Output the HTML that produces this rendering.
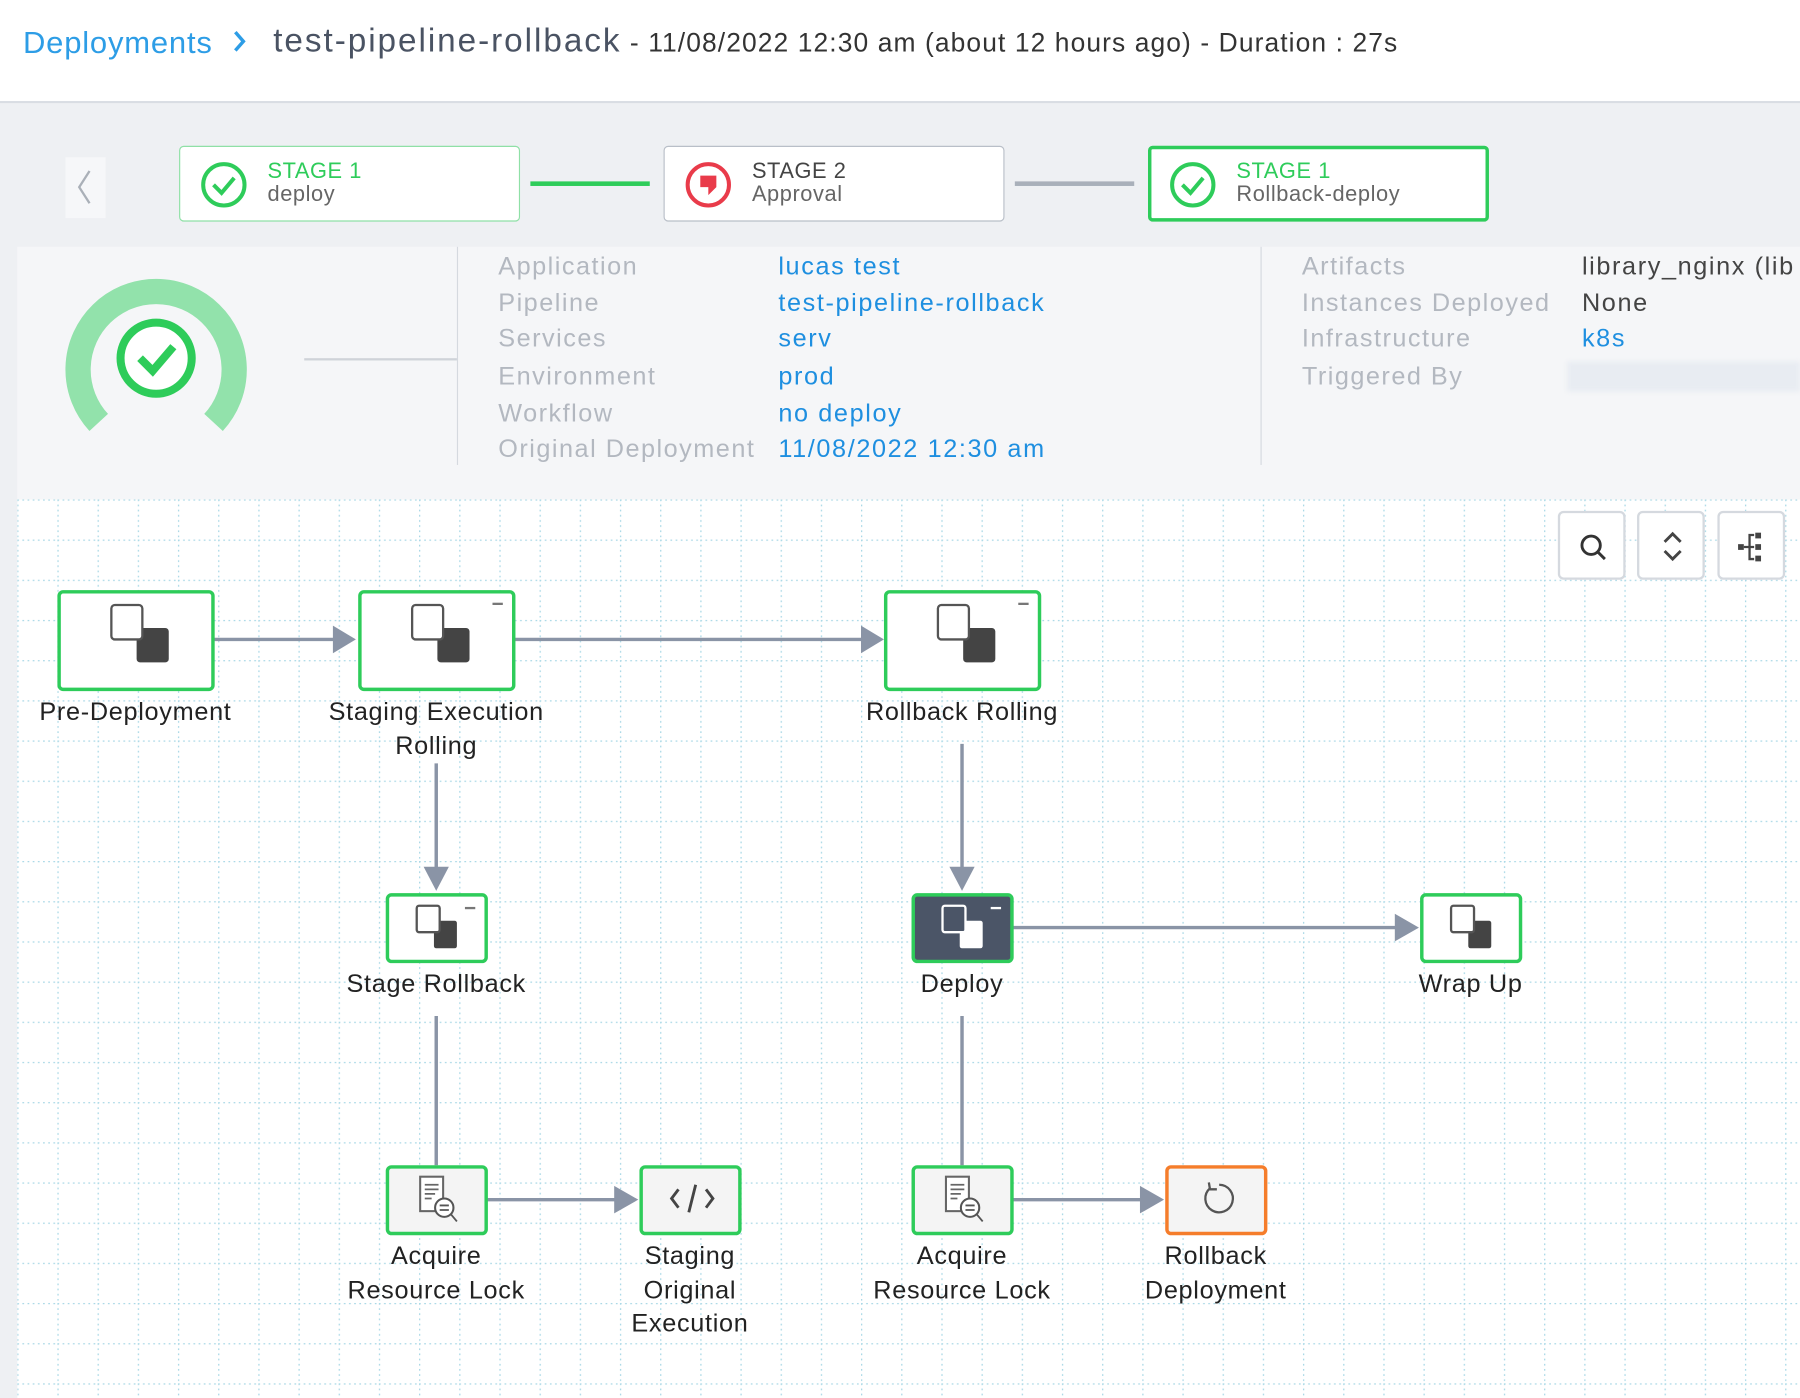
<!DOCTYPE html>
<html><head><meta charset="utf-8"><style>
html,body{margin:0;padding:0;width:1800px;height:1398px;overflow:hidden;background:#fff;}
#w{position:absolute;left:0;top:0;width:1568px;height:1218px;transform:scale(1.148);transform-origin:0 0;font-family:"Liberation Sans",sans-serif;}
.a{position:absolute;}
.hdr{left:0;top:0;width:1568px;height:88px;background:#fff;border-bottom:2px solid #d9dde3;}
.body{left:0;top:90px;width:1568px;height:1128px;background:#eef0f3;}
.stg{position:absolute;top:127px;width:297px;height:66px;background:#fff;border-radius:4px;box-sizing:border-box;}
.st1{font-size:19px;position:absolute;left:76px;top:11px;letter-spacing:.5px;}
.st2{font-size:19px;position:absolute;left:76px;top:31px;color:#666;letter-spacing:.5px;}
.lbl{position:absolute;font-size:22px;color:#b3b8c0;letter-spacing:1.3px;white-space:nowrap;}
.val{position:absolute;font-size:22px;color:#1e8fe0;letter-spacing:1.4px;white-space:nowrap;}
.node{position:absolute;box-sizing:border-box;border:3px solid #2ecc5a;border-radius:5px;background:#fff;}
.nl{position:absolute;font-size:22px;color:#222;text-align:center;line-height:29.5px;width:240px;letter-spacing:.6px;}
.btn{position:absolute;top:445px;width:59px;height:60px;box-sizing:border-box;border:2px solid #d5d9df;border-radius:5px;background:#fff;}
</style></head><body><div id="w">
<div class="a hdr"></div>
<div class="a" style="left:20px;top:22px;font-size:27px;color:#2d9de6;letter-spacing:.7px;">Deployments</div>
<svg class="a" style="left:200px;top:24px" width="18" height="24"><path d="M5 4 L12 12 L5 20" stroke="#2d9de6" stroke-width="3" fill="none"/></svg>
<div class="a" style="left:238px;top:20px;font-size:29px;color:#4a5363;white-space:nowrap;letter-spacing:1.7px;">test-pipeline-rollback<span style="font-size:23px;color:#333;letter-spacing:0.95px;"> - 11/08/2022 12:30 am (about 12 hours ago) - Duration : 27s</span></div>
<div class="a body"></div>
<div class="a" style="left:57px;top:137px;width:35px;height:53px;background:#f6f7f9;"></div>
<svg class="a" style="left:62px;top:146px" width="24" height="34"><path d="M16 3 L7 17 L16 31" stroke="#aab0b8" stroke-width="2" fill="none"/></svg>
<div class="stg" style="left:156px;border:1.5px solid #8fe0a6;"><svg class="a" style="left:16px;top:12px" width="44" height="44"><circle cx="22" cy="21" r="18" stroke="#2ecc5a" stroke-width="3.5" fill="none"/><path d="M13 21 L20 28 L31 15" stroke="#2ecc5a" stroke-width="3.5" fill="none"/></svg><div class="st1" style="color:#2ecc5a">STAGE 1</div><div class="st2">deploy</div></div>
<div class="a" style="left:462px;top:158px;width:104px;height:4px;background:#2ecc5a"></div>
<div class="stg" style="left:578px;border:1.5px solid #b9bfc8;"><svg class="a" style="left:16px;top:12px" width="44" height="44"><circle cx="22" cy="21" r="18" stroke="#e93b4a" stroke-width="3.5" fill="none"/><path d="M15 13 h14 v10 l-7 7 v-7 h-7z" fill="#e93b4a"/></svg><div class="st1" style="color:#444">STAGE 2</div><div class="st2">Approval</div></div>
<div class="a" style="left:884px;top:158px;width:104px;height:4px;background:#a9b0ba"></div>
<div class="stg" style="left:1000px;border:3px solid #2ecc5a;"><svg class="a" style="left:14px;top:10px" width="44" height="44"><circle cx="22" cy="21" r="18" stroke="#2ecc5a" stroke-width="3.5" fill="none"/><path d="M13 21 L20 28 L31 15" stroke="#2ecc5a" stroke-width="3.5" fill="none"/></svg><div class="st1" style="color:#2ecc5a;left:74px;top:9px">STAGE 1</div><div class="st2" style="left:74px;top:29px">Rollback-deploy</div></div>

<div class="a" style="left:15px;top:215px;width:1553px;height:220px;background:#f5f6f8;"></div>
<div class="a" style="left:398px;top:215px;width:1px;height:190px;background:#d5d9df"></div>
<div class="a" style="left:1098px;top:215px;width:1px;height:190px;background:#d5d9df"></div>
<div class="a" style="left:265px;top:312px;width:133px;height:2px;background:#cfd3d9"></div>
<svg class="a" style="left:50px;top:228px" width="172" height="156">
<path d="M36 140 A68 68 0 1 1 136 140" stroke="#92e2ab" stroke-width="22" fill="none"/>
<circle cx="86" cy="84" r="31" stroke="#2ecc5a" stroke-width="7" fill="#fff"/>
<path d="M72 84 L83 95 L101 74" stroke="#2ecc5a" stroke-width="7" fill="none"/>
</svg>
<div class="lbl" style="left:434px;top:219px">Application</div>
<div class="lbl" style="left:434px;top:251px">Pipeline</div>
<div class="lbl" style="left:434px;top:282px">Services</div>
<div class="lbl" style="left:434px;top:315px">Environment</div>
<div class="lbl" style="left:434px;top:347px">Workflow</div>
<div class="lbl" style="left:434px;top:378px">Original Deployment</div>
<div class="val" style="left:678px;top:219px">lucas test</div>
<div class="val" style="left:678px;top:251px">test-pipeline-rollback</div>
<div class="val" style="left:678px;top:282px">serv</div>
<div class="val" style="left:678px;top:315px">prod</div>
<div class="val" style="left:678px;top:347px">no deploy</div>
<div class="val" style="left:678px;top:378px">11/08/2022 12:30 am</div>
<div class="lbl" style="left:1134px;top:219px">Artifacts</div>
<div class="lbl" style="left:1134px;top:251px">Instances Deployed</div>
<div class="lbl" style="left:1134px;top:282px">Infrastructure</div>
<div class="lbl" style="left:1134px;top:315px">Triggered By</div>
<div class="val" style="left:1378px;top:219px;color:#444;white-space:nowrap">library_nginx (lib</div>
<div class="val" style="left:1378px;top:251px;color:#444">None</div>
<div class="val" style="left:1378px;top:282px">k8s</div>
<div class="a" style="left:1365px;top:315px;width:203px;height:26px;background:#e8ecf2;filter:blur(2px)"></div>

<svg class="a" style="left:15px;top:435px" width="1553" height="783">
<defs><pattern id="g" x="0" y="0" width="35" height="35" patternUnits="userSpaceOnUse">
<line x1="0" y1="0.5" x2="35" y2="0.5" stroke="#a9d8e6" stroke-width="1.2" stroke-dasharray="1.5 3"/>
<line x1="0.5" y1="0" x2="0.5" y2="35" stroke="#a9d8e6" stroke-width="1.2" stroke-dasharray="1.5 3"/>
</pattern></defs>
<rect width="1553" height="783" fill="#fff"/><rect width="1553" height="783" fill="url(#g)"/>
</svg>

<div class="btn" style="left:1357px"><svg class="a" style="left:15px;top:16px" width="28" height="28"><circle cx="12" cy="12" r="8" stroke="#333" stroke-width="2.5" fill="none"/><path d="M18 18 L24 24" stroke="#333" stroke-width="2.5"/></svg></div>
<div class="btn" style="left:1426px"><svg class="a" style="left:16px;top:14px" width="26" height="30"><path d="M6 11 L13 4 L20 11 M6 19 L13 26 L20 19" stroke="#444" stroke-width="2.5" fill="none"/></svg></div>
<div class="btn" style="left:1496px"><svg class="a" style="left:14px;top:14px" width="30" height="30"><rect x="2" y="13" width="5" height="5" fill="#444"/><path d="M7 15.5 H12 M16 5 H12 V26 H16 M12 15.5 H16" stroke="#444" stroke-width="2" fill="none"/><rect x="17" y="3" width="5" height="5" fill="#444"/><rect x="17" y="13" width="5" height="5" fill="#444"/><rect x="17" y="23" width="5" height="5" fill="#444"/></svg></div>

<svg class="a" style="left:0;top:0" width="1568" height="1218">
<g stroke="#8a94a6" stroke-width="3" fill="none">
<path d="M186 557 H295 M448 557 H755 M380 665 V760 M838 648 V760 M882 808 H1220 M380 885 V1015 M838 885 V1015 M424 1045 H540 M882 1045 H998"/>
</g>
<g fill="#8a94a6">
<path d="M290 545 L310 557 L290 569Z"/><path d="M750 545 L770 557 L750 569Z"/>
<path d="M369 755 L380 776 L391 755Z"/><path d="M827 755 L838 776 L849 755Z"/>
<path d="M1215 796 L1236 808 L1215 820Z"/><path d="M535 1033 L556 1045 L535 1057Z"/><path d="M993 1033 L1014 1045 L993 1057Z"/>
</g>
</svg>

<div class="node" style="left:50px;top:514px;width:137px;height:88px"><svg class="a" style="left:40px;top:6px" width="56" height="56"><rect x="26" y="24" width="28" height="30" rx="3" fill="#444"/><rect x="4" y="4" width="27" height="30" rx="3" fill="#fff" stroke="#555" stroke-width="2"/></svg></div>
<div class="node" style="left:312px;top:514px;width:137px;height:88px"><svg class="a" style="left:40px;top:6px" width="56" height="56"><rect x="26" y="24" width="28" height="30" rx="3" fill="#444"/><rect x="4" y="4" width="27" height="30" rx="3" fill="#fff" stroke="#555" stroke-width="2"/></svg><div class="a" style="right:8px;top:8px;width:9px;height:2px;background:#777"></div></div>
<div class="node" style="left:770px;top:514px;width:137px;height:88px"><svg class="a" style="left:40px;top:6px" width="56" height="56"><rect x="26" y="24" width="28" height="30" rx="3" fill="#444"/><rect x="4" y="4" width="27" height="30" rx="3" fill="#fff" stroke="#555" stroke-width="2"/></svg><div class="a" style="right:8px;top:8px;width:9px;height:2px;background:#777"></div></div>
<div class="nl" style="left:-2px;top:605px">Pre-Deployment</div>
<div class="nl" style="left:260px;top:605px">Staging Execution<br>Rolling</div>
<div class="nl" style="left:718px;top:605px">Rollback Rolling</div>

<div class="node" style="left:336px;top:778px;width:89px;height:61px"><svg class="a" style="left:20px;top:4px" width="44" height="44"><rect x="19" y="17" width="20" height="24" rx="2" fill="#444"/><rect x="4" y="4" width="20" height="23" rx="2" fill="#fff" stroke="#555" stroke-width="2"/></svg><div class="a" style="right:8px;top:9px;width:9px;height:2px;background:#777"></div></div>
<div class="node" style="left:794px;top:778px;width:89px;height:61px;background:#4b5567"><svg class="a" style="left:20px;top:4px" width="44" height="44"><rect x="19" y="17" width="20" height="24" rx="2" fill="#fff"/><rect x="4" y="4" width="20" height="23" rx="2" fill="#4b5567" stroke="#fff" stroke-width="2"/></svg><div class="a" style="right:8px;top:9px;width:9px;height:2px;background:#fff"></div></div>
<div class="node" style="left:1237px;top:778px;width:89px;height:61px"><svg class="a" style="left:20px;top:4px" width="44" height="44"><rect x="19" y="17" width="20" height="24" rx="2" fill="#444"/><rect x="4" y="4" width="20" height="23" rx="2" fill="#fff" stroke="#555" stroke-width="2"/></svg></div>
<div class="nl" style="left:260px;top:842px">Stage Rollback</div>
<div class="nl" style="left:718px;top:842px;color:#222">Deploy</div>
<div class="nl" style="left:1161px;top:842px">Wrap Up</div>

<div class="node" style="left:336px;top:1015px;width:89px;height:61px;background:#f4f4f4"><svg class="a" style="left:22px;top:4px" width="44" height="48"><rect x="5" y="3" width="20" height="30" fill="#fff" stroke="#666" stroke-width="1.8"/><path d="M9 10 H21 M9 14 H21 M9 18 H18 M9 22 H15" stroke="#666" stroke-width="1.5"/><circle cx="26" cy="30" r="8" fill="#fff" stroke="#555" stroke-width="1.8"/><path d="M22 28 H30 M22 32 H30 M32 36 L37 42" stroke="#555" stroke-width="1.6"/></svg></div>
<div class="node" style="left:557px;top:1015px;width:89px;height:61px;background:#f4f4f4"><svg class="a" style="left:20px;top:8px" width="46" height="36"><path d="M11 10 L5 18 L11 26 M35 10 L41 18 L35 26 M26 6 L20 30" stroke="#444" stroke-width="2.5" fill="none"/></svg></div>
<div class="node" style="left:794px;top:1015px;width:89px;height:61px;background:#f4f4f4"><svg class="a" style="left:22px;top:4px" width="44" height="48"><rect x="5" y="3" width="20" height="30" fill="#fff" stroke="#666" stroke-width="1.8"/><path d="M9 10 H21 M9 14 H21 M9 18 H18 M9 22 H15" stroke="#666" stroke-width="1.5"/><circle cx="26" cy="30" r="8" fill="#fff" stroke="#555" stroke-width="1.8"/><path d="M22 28 H30 M22 32 H30 M32 36 L37 42" stroke="#555" stroke-width="1.6"/></svg></div>
<div class="node" style="left:1015px;top:1015px;width:89px;height:61px;background:#f4f4f4;border-color:#f57d2b"><svg class="a" style="left:24px;top:8px" width="40" height="40"><path d="M12 9 A12 12 0 1 0 20 6" stroke="#555" stroke-width="2" fill="none"/><path d="M11 4 L12 10 L18 10" stroke="#555" stroke-width="2" fill="none"/></svg></div>
<div class="nl" style="left:260px;top:1079px">Acquire<br>Resource Lock</div>
<div class="nl" style="left:481px;top:1079px">Staging<br>Original<br>Execution</div>
<div class="nl" style="left:718px;top:1079px">Acquire<br>Resource Lock</div>
<div class="nl" style="left:939px;top:1079px">Rollback<br>Deployment</div>
</div></body></html>
